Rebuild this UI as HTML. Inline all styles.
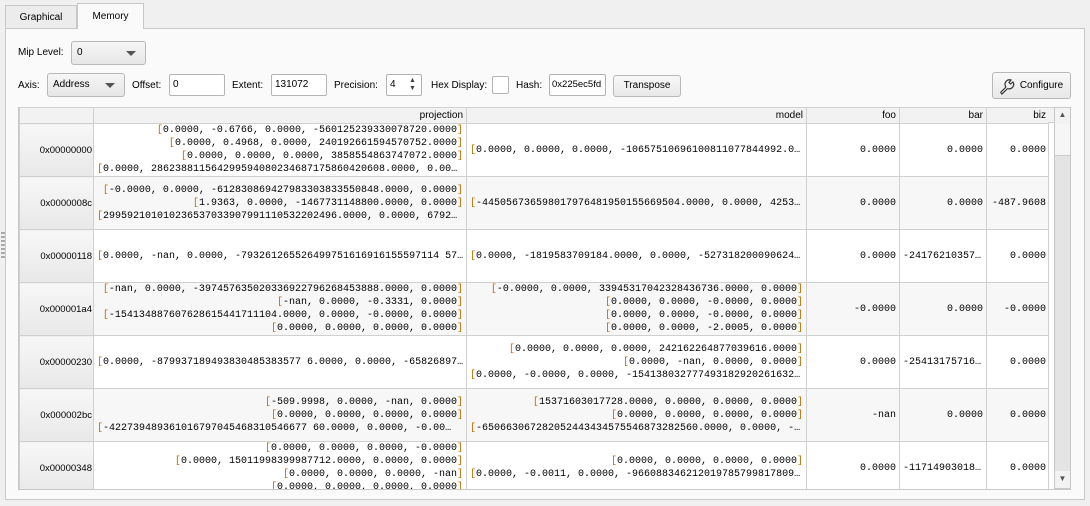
<!DOCTYPE html>
<html><head><style>
*{box-sizing:border-box;margin:0;padding:0}
body{width:1090px;height:506px;background:#f0f0f0;font-family:"Liberation Sans",sans-serif;font-size:10px;color:#000;position:relative;overflow:hidden}
.abs{position:absolute}
.tab{position:absolute;border:1px solid #c8c8c8;border-bottom:none;font-size:10px;text-align:center}
.pane{left:5px;top:28px;width:1080px;height:472px;background:#fafafa;border:1px solid #c8c8c8}
.combo{position:absolute;border:1px solid #b8b8b8;border-radius:3px;background:linear-gradient(#f6f6f6,#e6e6e6);padding:0 0 0 5px;line-height:22px;height:24px}
.combo:after{content:"";position:absolute;right:9px;top:9px;border-left:5px solid transparent;border-right:5px solid transparent;border-top:5px solid #555}
.edit{position:absolute;border:1px solid #b4b4b4;background:#fff;height:22px;line-height:20px;padding-left:3px;border-radius:2px}
.btn{position:absolute;border:1px solid #b8b8b8;border-radius:3px;background:linear-gradient(#f8f8f8,#e8e8e8);text-align:center;line-height:20px;height:22px}
.lbl{position:absolute}
.wrap{position:absolute;left:18px;top:107px;width:1036px;height:382px;overflow:hidden;background:#fff;border-left:1px solid #c8c8c8}
table{border-collapse:collapse;table-layout:fixed;width:1030px;background:#fff}
td,th{border:1px solid #d0d0d0;padding:0 3px;overflow:hidden;white-space:pre}
th{height:16px;background:#f2f2f2;font-weight:normal;text-align:right;font-size:10px}
td{height:53px;font-family:"Liberation Mono",monospace;font-size:10px;line-height:13px;text-align:right}
td.rh{background:linear-gradient(#f7f7f7,#e8e8e8);font-family:"Liberation Sans",sans-serif;font-size:9.5px;text-align:right;padding-right:1px}
tr.alt td{background:#f7f7f7}
tr.alt td.rh{background:linear-gradient(#f7f7f7,#e8e8e8)}
.l{text-align:left}
b{font-weight:normal;color:#c07000}
</style></head><body>
<div class="abs pane"></div>
<div class="tab" style="left:5px;top:5px;width:72px;height:23px;background:#ececec;line-height:24px">Graphical</div>
<div class="tab" style="left:77px;top:3px;width:67px;height:26px;background:#fafafa;line-height:26px">Memory</div>

<div class="lbl" style="left:18px;top:47px">Mip Level:</div>
<div class="combo" style="left:71px;top:41px;width:75px">0</div>

<div class="lbl" style="left:18px;top:80px">Axis:</div>
<div class="combo" style="left:47px;top:73px;width:78px">Address</div>
<div class="lbl" style="left:132px;top:80px">Offset:</div>
<div class="edit" style="left:169px;top:74px;width:56px">0</div>
<div class="lbl" style="left:232px;top:80px">Extent:</div>
<div class="edit" style="left:271px;top:74px;width:56px">131072</div>
<div class="lbl" style="left:334px;top:80px">Precision:</div>
<div class="edit" style="left:386px;top:74px;width:36px">4</div>
<div class="abs" style="left:409px;top:77px;font-size:7px;line-height:8px;color:#444">▲<br>▼</div>
<div class="lbl" style="left:431px;top:80px">Hex Display:</div>
<div class="edit" style="left:492px;top:76px;width:17px;height:18px"></div>
<div class="lbl" style="left:516px;top:80px">Hash:</div>
<div class="edit" style="left:549px;top:74px;width:57px;font-size:9.5px;padding-left:2px">0x225ec5fd</div>
<div class="btn" style="left:613px;top:75px;width:68px">Transpose</div>
<div class="btn" style="left:992px;top:72px;width:79px;height:27px;line-height:25px;padding-left:20px">Configure
<svg style="position:absolute;left:5px;top:4px" width="18" height="18" viewBox="0 0 18 18"><path d="M2.5 15.5 L8 10 M2.5 15.5 L4 17 L9.5 11.5 M8 10 A4.5 4.5 0 0 1 13 3 L11 5.5 L12.5 7 L15 5 A4.5 4.5 0 0 1 9.5 11.5" fill="none" stroke="#333" stroke-width="1.2"/></svg></div>

<div class="abs" style="left:1px;top:232px;width:4px;height:28px;background:repeating-linear-gradient(#aaa 0 2px,transparent 2px 4px)"></div>

<div class="wrap"><table>
<colgroup><col style="width:74px"><col style="width:373px"><col style="width:340px"><col style="width:93px"><col style="width:87px"><col style="width:63px"></colgroup>
<tr><th></th><th>projection</th><th>model</th><th>foo</th><th>bar</th><th>biz</th></tr>
<tr><td class="rh">0x00000000</td><td><b>[</b>0.0000, -0.6766, 0.0000, -560125239330078720.0000<b>]</b>
<b>[</b>0.0000, 0.4968, 0.0000, 240192661594570752.0000<b>]</b>
<b>[</b>0.0000, 0.0000, 0.0000, 3858554863747072.0000<b>]</b>
<span style="display:block;text-align:left"><b>[</b>0.0000, 286238811564299594080234687175860420608.0000, 0.00…</span></td><td class="l"><b>[</b>0.0000, 0.0000, 0.0000, -10657510696100811077844992.0…</td><td>0.0000</td><td>0.0000</td><td>0.0000</td></tr>
<tr class="alt"><td class="rh">0x0000008c</td><td><b>[</b>-0.0000, 0.0000, -612830869427983303833550848.0000, 0.0000<b>]</b>
<b>[</b>1.9363, 0.0000, -1467731148800.0000, 0.0000<b>]</b>
<span style="display:block;text-align:left"><b>[</b>299592101010236537033907991110532202496.0000, 0.0000, 6792…</span></td><td class="l"><b>[</b>-445056736598017976481950155669504.0000, 0.0000, 4253…</td><td>0.0000</td><td>0.0000</td><td>-487.9608</td></tr>
<tr><td class="rh">0x00000118</td><td class="l"><b>[</b>0.0000, -nan, 0.0000, -793261265526499751616916155597114 57…</td><td class="l"><b>[</b>0.0000, -1819583709184.0000, 0.0000, -527318200090624…</td><td>0.0000</td><td class="l">-24176210357…</td><td>0.0000</td></tr>
<tr class="alt"><td class="rh">0x000001a4</td><td><b>[</b>-nan, 0.0000, -397457635020336922796268453888.0000, 0.0000<b>]</b>
<b>[</b>-nan, 0.0000, -0.3331, 0.0000<b>]</b>
<b>[</b>-154134887607628615441711104.0000, 0.0000, -0.0000, 0.0000<b>]</b>
<b>[</b>0.0000, 0.0000, 0.0000, 0.0000<b>]</b></td><td><b>[</b>-0.0000, 0.0000, 33945317042328436736.0000, 0.0000<b>]</b>
<b>[</b>0.0000, 0.0000, -0.0000, 0.0000<b>]</b>
<b>[</b>0.0000, 0.0000, -0.0000, 0.0000<b>]</b>
<b>[</b>0.0000, 0.0000, -2.0005, 0.0000<b>]</b></td><td>-0.0000</td><td>0.0000</td><td>-0.0000</td></tr>
<tr><td class="rh">0x00000230</td><td class="l"><b>[</b>0.0000, -879937189493830485383577 6.0000, 0.0000, -65826897…</td><td><b>[</b>0.0000, 0.0000, 0.0000, 242162264877039616.0000<b>]</b>
<b>[</b>0.0000, -nan, 0.0000, 0.0000<b>]</b>
<span style="display:block;text-align:left"><b>[</b>0.0000, -0.0000, 0.0000, -154138032777493182920261632…</span></td><td>0.0000</td><td class="l">-25413175716…</td><td>0.0000</td></tr>
<tr class="alt"><td class="rh">0x000002bc</td><td><b>[</b>-509.9998, 0.0000, -nan, 0.0000<b>]</b>
<b>[</b>0.0000, 0.0000, 0.0000, 0.0000<b>]</b>
<span style="display:block;text-align:left"><b>[</b>-422739489361016797045468310546677 60.0000, 0.0000, -0.00…</span></td><td><b>[</b>15371603017728.0000, 0.0000, 0.0000, 0.0000<b>]</b>
<b>[</b>0.0000, 0.0000, 0.0000, 0.0000<b>]</b>
<span style="display:block;text-align:left"><b>[</b>-650663067282052443434575546873282560.0000, 0.0000, -…</span></td><td>-nan</td><td>0.0000</td><td>0.0000</td></tr>
<tr><td class="rh">0x00000348</td><td style="vertical-align:top"><b>[</b>0.0000, 0.0000, 0.0000, -0.0000<b>]</b>
<b>[</b>0.0000, 15011998399987712.0000, 0.0000, 0.0000<b>]</b>
<b>[</b>0.0000, 0.0000, 0.0000, -nan<b>]</b>
<b>[</b>0.0000, 0.0000, 0.0000, 0.0000<b>]</b></td><td><b>[</b>0.0000, 0.0000, 0.0000, 0.0000<b>]</b>
<span style="display:block;text-align:left"><b>[</b>0.0000, -0.0011, 0.0000, -966088346212019785799817809…</span></td><td>0.0000</td><td class="l">-11714903018…</td><td>0.0000</td></tr>
</table></div>
<div class="abs" style="left:1048px;top:107px;width:6px;height:16px;background:#f2f2f2;border-top:1px solid #d0d0d0;border-bottom:1px solid #d0d0d0"></div>
<div class="abs" style="left:1048px;top:123px;width:6px;height:366px;background:#fff;border-left:1px solid #d0d0d0"></div>
<div class="abs" style="left:1054px;top:107px;width:17px;height:382px;background:#e4e4e4;border:1px solid #c8c8c8"></div>
<div class="abs" style="left:1055px;top:108px;width:15px;height:16px;background:#f2f2f2;font-size:8px;text-align:center;line-height:14px;color:#555">▲</div>
<div class="abs" style="left:1055px;top:124px;width:15px;height:32px;background:#f6f6f6;border-bottom:1px solid #ccc"></div>
<div class="abs" style="left:1055px;top:471px;width:15px;height:17px;background:#f2f2f2;font-size:8px;text-align:center;line-height:16px;color:#555">▼</div>
<div class="abs" style="left:18px;top:489px;width:1053px;height:1px;background:#c8c8c8"></div>
</body></html>
